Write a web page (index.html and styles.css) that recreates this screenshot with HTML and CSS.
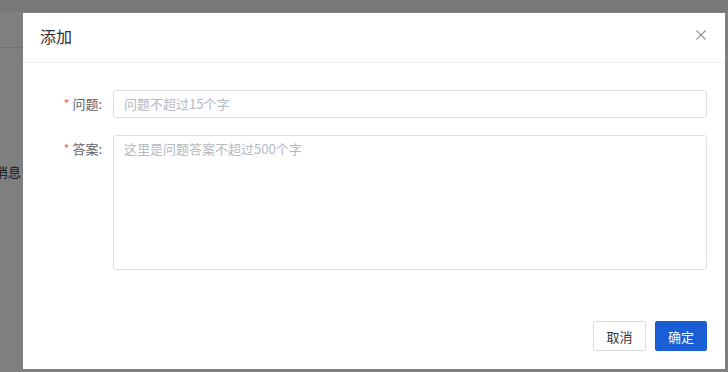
FILE: index.html
```html
<!DOCTYPE html>
<html lang="zh">
<head>
<meta charset="utf-8">
<link rel="stylesheet" href="styles.css">
</head>
<body>
<div class="page">
  <div class="page-top"></div>
  <div class="page-head"></div>
  <div class="page-body">
    <div class="page-msg">消息</div>
  </div>
</div>
<div class="overlay">
  <div class="dialog">
    <div class="dialog-header">
      <span class="dialog-title">添加</span>
      <svg class="dialog-close" width="10" height="10" viewBox="0 0 10 10"><path d="M0.5 0.5L9.5 9.5M9.5 0.5L0.5 9.5" stroke="#909399" stroke-width="1.1" fill="none"/></svg>
    </div>
    <div class="dialog-body">
      <div class="form-row">
        <label class="form-label"><span class="req">*</span> 问题:</label>
        <div class="form-control"><div class="input">问题不超过15个字</div></div>
      </div>
      <div class="form-row">
        <label class="form-label"><span class="req">*</span> 答案:</label>
        <div class="form-control"><div class="textarea">这里是问题答案不超过500个字</div></div>
      </div>
    </div>
    <div class="dialog-footer">
      <button class="btn">取消</button>
      <button class="btn btn-primary">确定</button>
    </div>
  </div>
</div>
</body>
</html>
```
FILE: styles.css
```css
* { box-sizing: border-box; }
html, body {
  margin: 0;
  padding: 0;
  width: 728px;
  height: 372px;
  overflow: hidden;
  font-family: "Microsoft YaHei", "Noto Sans CJK SC", "Liberation Sans", sans-serif;
}
.page {
  width: 728px;
  height: 372px;
  background: #fff;
}
.page-top {
  height: 12px;
  background: #f0f0f0;
}
.page-head {
  height: 36px;
  border-bottom: 1px solid #e0e0e0;
}
.page-body {
  padding-top: 116px;
}
.page-msg {
  margin-left: -5px;
  font-size: 13px;
  color: #333;
  line-height: 16px;
}
.overlay {
  position: absolute;
  inset: 0;
  background: rgba(0, 0, 0, 0.5);
}
.dialog {
  position: absolute;
  left: 23px;
  top: 13px;
  width: 702px;
  height: 356px;
  background: #fff;
  display: flex;
  flex-direction: column;
}
.dialog-header {
  height: 50px;
  border-bottom: 1px solid #ebeef5;
  display: flex;
  align-items: center;
  justify-content: space-between;
  padding: 0 19px 0 17px;
}
.dialog-title {
  font-size: 16px;
  color: #303133;
  line-height: 20px;
  margin-top: -3px;
}
.dialog-close {
  display: block;
  margin-top: -5px;
}
.dialog-body {
  flex: 1;
  padding: 27px 18px 0 10px;
  display: flex;
  flex-direction: column;
  gap: 17px;
}
.form-row {
  display: flex;
  align-items: flex-start;
}
.form-label {
  width: 80px;
  flex: none;
  text-align: right;
  padding-right: 11px;
  font-size: 13px;
  color: #606266;
  line-height: 28px;
}
.req {
  color: #f56c6c;
}
.form-control {
  flex: 1;
}
.input, .textarea {
  border: 1px solid #dcdfe6;
  border-radius: 3px;
  font-size: 13px;
  color: #b4b8bf;
  padding: 0 10px;
}
.input {
  height: 28px;
  line-height: 26px;
}
.textarea {
  height: 135px;
  line-height: 20px;
  padding-top: 3px;
}
.dialog-footer {
  display: flex;
  justify-content: flex-end;
  gap: 9px;
  padding: 0 18px 18px 0;
}
.btn {
  height: 30px;
  width: 53px;
  border: 1px solid #dcdfe6;
  border-radius: 2px;
  background: #fff;
  color: #333;
  font-family: inherit;
  font-size: 13px;
  padding: 0;
}
.btn-primary {
  background: #1a5ed6;
  border-color: #1a5ed6;
  color: #fff;
  width: 52px;
}
```
